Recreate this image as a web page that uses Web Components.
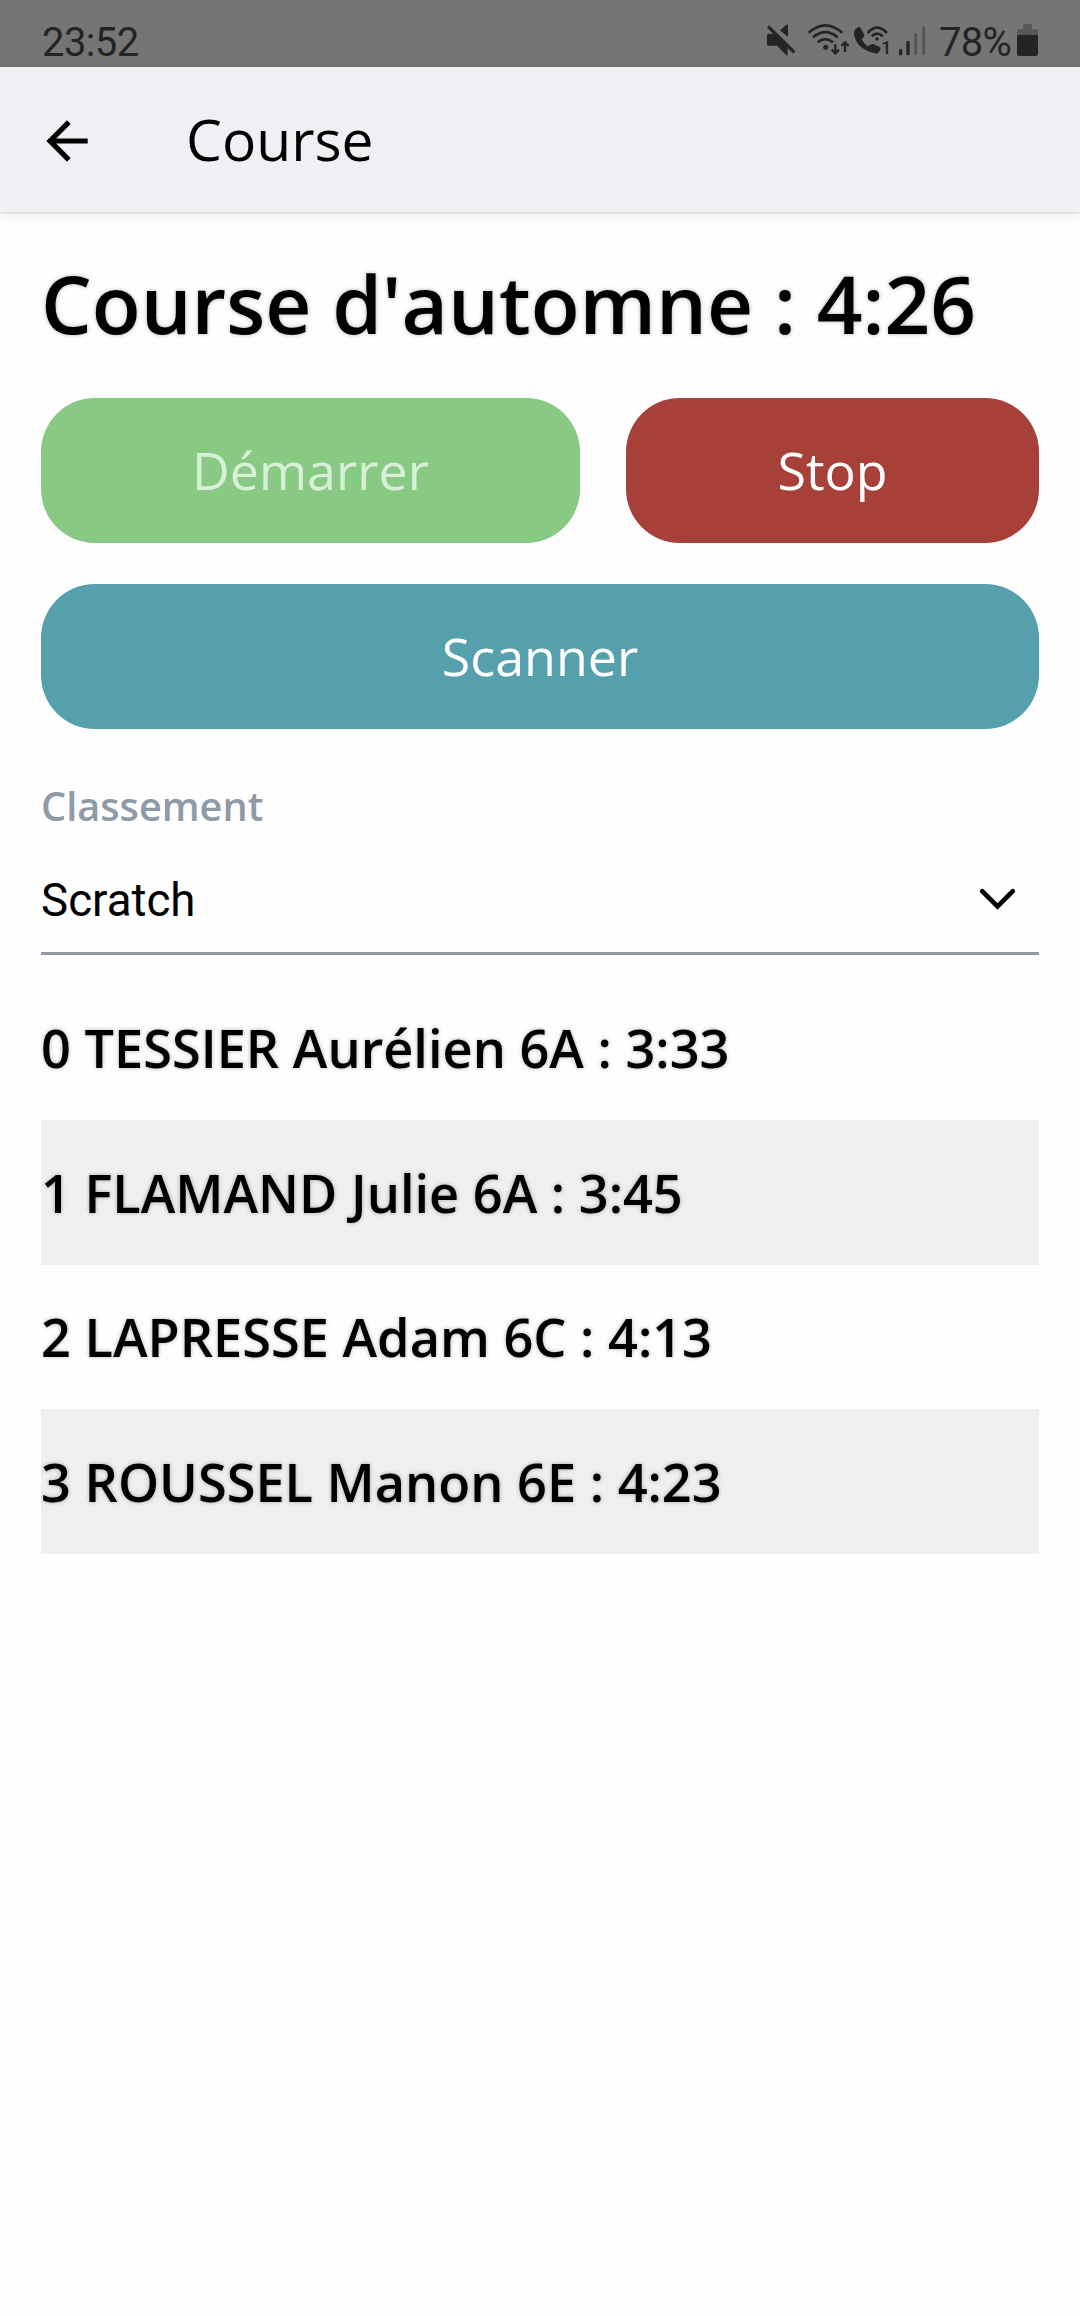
<!DOCTYPE html>
<html lang="fr">
<head>
<meta charset="utf-8">
<title>Course</title>
<style>
html,body{margin:0;background:#fefefe}
body{font-family:"Open Sans","Noto Sans",sans-serif;color:#000}
</style>
</head>
<body>
<race-app></race-app>
<script>
const define = (name, html) => {
  const t = document.createElement('template');
  t.innerHTML = html;
  customElements.define(name, class extends HTMLElement {
    constructor() {
      super();
      this.attachShadow({mode: 'open'}).append(t.content.cloneNode(true));
    }
  });
};

define('status-bar', `
<style>
:host{display:flex;align-items:center;box-sizing:border-box;height:67px;padding:12px 42px 0 42px;background:#757575;color:#242424;font:40px Roboto,sans-serif}
span{line-height:46px;padding-top:6px;white-space:nowrap}
.time{margin-right:auto;letter-spacing:-.6px}
.pct{margin:0 4px 0 11px;width:74px;letter-spacing:-.7px}
svg{display:block;flex:none}
</style>
<span class="time">23:52</span>
<svg width="163.33" height="35" viewBox="75 66 490 105" fill="#242424">
  <path d="M120 91l20-17h4v37z"/>
  <path d="M81 106q0-5 5-5h18l39 40v25h-4L111 137H86q-5 0-5-5z"/>
  <path d="M84 79L163 157" stroke="#242424" stroke-width="9.5" fill="none"/>
  <g fill="none" stroke="#242424" stroke-width="8">
    <path d="M206 98Q256 54 307 98M219 112Q256 81 293 112M233 127Q256 108 279 127"/>
    <path d="M286 133v27M275 149l11 11 11-11M315 156v-28M304 138l11-11 11 11" stroke-width="7"/>
    <path d="M383 99Q411 67 441 99M395 109Q411 93 429 109" stroke-width="8"/>
  </g>
  <circle cx="257" cy="142" r="7.5"/>
  <circle cx="411" cy="117" r="5.5"/>
  <path d="M346 88l9-7q5-1 7 4l10 18q2 5-1 8l-6 7q6 13 18 21l10-6q4-2 8 0l18 8q4 2 3 6l-5 9q-5 6-13 4-57-15-62-59-1-9 4-13z"/>
  <text x="424" y="161" font-family="Roboto,sans-serif" font-weight="600" font-size="54" textLength="30" lengthAdjust="spacingAndGlyphs">1</text>
  <rect x="477" y="147" width="10" height="19" rx="4"/>
  <rect x="499" y="123" width="10" height="43" rx="4"/>
  <rect x="522" y="99" width="10" height="67" rx="4" fill="#575757"/>
  <rect x="546" y="79" width="10" height="87" rx="4" fill="#575757"/>
</svg>
<span class="pct">78%</span>
<svg width="21" height="32" viewBox="0 0 63 96">
  <path d="M18 15V5q0-5 5-5h17q5 0 5 5v10h12q6 0 6 6v13H0V21q0-6 6-6z" fill="#575757"/>
  <path d="M0 33h63v57q0 6-6 6H6q-6 0-6-6z" fill="#242424"/>
</svg>`);

define('app-header', `
<style>
:host{display:flex;align-items:center;box-sizing:border-box;height:145px;padding-left:36px;background:#eff0f4;box-shadow:0 1px 2px rgba(0,0,0,.12),0 3px 12px rgba(0,0,0,.09);position:relative}
svg{display:block;flex:none;margin-top:2.5px}
div{margin-left:88px;font-size:57px;line-height:80px;margin-top:-1px}
</style>
<svg width="62" height="62" viewBox="0 0 24 24"><path d="M20 11H7.83l5.59-5.59L12 4l-8 8 8 8 1.41-1.41L7.83 13H20z"/></svg>
<div><slot></slot></div>`);

define('race-button', `
<style>
:host{display:flex;align-items:center;justify-content:center;box-sizing:border-box;height:145px;padding-bottom:2px;border-radius:54px;font-size:52px;color:#fff;background:var(--tone)}
:host([disabled]){color:#d7f0d7}
</style><slot></slot>`);

define('select-field', `
<style>
:host{display:block}
.label{font-size:39.7px;line-height:50px;font-weight:600;color:#8e9aa6}
.value{display:flex;align-items:center;justify-content:space-between;height:103px;margin-top:18px;padding-right:20px;border-bottom:3px solid #8e9aa6;font:45.7px Roboto,sans-serif}
svg{display:block;margin-bottom:3px}
</style>
<div class="label"><slot name="label"></slot></div>
<div class="value"><slot></slot><svg width="43" height="32" viewBox="0 0 43 32"><path d="M6.2 8.2L21.5 23.5 36.8 8.2" fill="none" stroke="#000" stroke-width="4.7" stroke-linecap="round"/></svg></div>`);

define('result-row', `
<style>
:host{display:flex;align-items:center;height:144.5px;font-size:52.3px;font-weight:600;white-space:nowrap;text-shadow:0 0 4px rgba(0,0,0,.3)}
:host(:nth-child(even)){background:#efefef}
</style><slot></slot>`);

define('race-app', `
<style>
:host{display:flex;flex-direction:column;height:2316px;background:#fefefe;overflow:hidden}
main{display:flex;flex-direction:column;padding:0 41px}
h1{margin:0 0 4px;font-size:80.15px;line-height:182px;font-weight:600;white-space:nowrap;text-shadow:0 0 4px rgba(0,0,0,.3)}
.actions{display:grid;grid-template-columns:539px 413px;column-gap:46px;row-gap:41px}
.wide{grid-column:1/-1}
select-field{margin-top:52px}
.list{margin-top:20.6px}
</style>
<status-bar></status-bar>
<app-header>Course</app-header>
<main>
  <h1>Course d'automne : 4:26</h1>
  <div class="actions">
    <race-button disabled style="--tone:#88c983">Démarrer</race-button>
    <race-button style="--tone:#a74039">Stop</race-button>
    <race-button class="wide" style="--tone:#569fac">Scanner</race-button>
  </div>
  <select-field><span slot="label">Classement</span>Scratch</select-field>
  <div class="list">
    <result-row>0 TESSIER Aurélien 6A : 3:33</result-row>
    <result-row>1 FLAMAND Julie 6A : 3:45</result-row>
    <result-row>2 LAPRESSE Adam 6C : 4:13</result-row>
    <result-row>3 ROUSSEL Manon 6E : 4:23</result-row>
  </div>
</main>`);
</script>
</body>
</html>
